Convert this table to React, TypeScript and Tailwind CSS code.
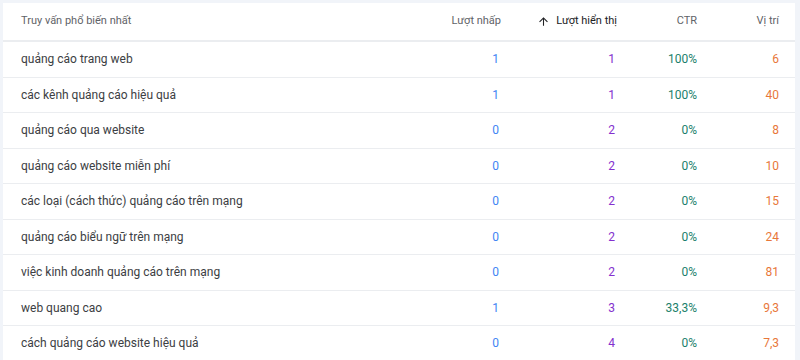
const rows = [
  { q: "quảng cáo trang web", clicks: "1", imp: "1", ctr: "100%", pos: "6" },
  { q: "các kênh quảng cáo hiệu quả", clicks: "1", imp: "1", ctr: "100%", pos: "40" },
  { q: "quảng cáo qua website", clicks: "0", imp: "2", ctr: "0%", pos: "8" },
  { q: "quảng cáo website miễn phí", clicks: "0", imp: "2", ctr: "0%", pos: "10" },
  { q: "các loại (cách thức) quảng cáo trên mạng", clicks: "0", imp: "2", ctr: "0%", pos: "15" },
  { q: "quảng cáo biểu ngữ trên mạng", clicks: "0", imp: "2", ctr: "0%", pos: "24" },
  { q: "việc kinh doanh quảng cáo trên mạng", clicks: "0", imp: "2", ctr: "0%", pos: "81" },
  { q: "web quang cao", clicks: "1", imp: "3", ctr: "33,3%", pos: "9,3" },
  { q: "cách quảng cáo website hiệu quả", clicks: "0", imp: "4", ctr: "0%", pos: "7,3" },
];

function ArrowUp() {
  return (
    <svg width="13" height="13" viewBox="0 0 24 24" className="mr-[6px]">
      <path d="M4 12l1.41 1.41L11 7.83V20h2V7.83l5.58 5.59L20 12l-8-8-8 8z" fill="#202124" />
    </svg>
  );
}

export default function App() {
  return (
    <div
      className="w-[800px] h-[360px] overflow-hidden bg-[#f1f4f9] pt-[3px] pl-[3px] pr-[5px]"
      style={{ fontFamily: "Roboto, 'Noto Sans', sans-serif" }}
    >
      <div className="bg-white h-full">
        {/* Header */}
        <div className="flex items-center h-[39px] border-b-2 border-[#ebedf0] text-[11px] text-[#5f6368]">
          <div className="flex-1 pl-[18px]">Truy vấn phổ biến nhất</div>
          <div className="w-[120px] text-right">Lượt nhấp</div>
          <div className="w-[116px] flex items-center justify-end text-[#202124]">
            <ArrowUp />
            Lượt hiển thị
          </div>
          <div className="w-[80px] text-right">CTR</div>
          <div className="w-[82px] text-right">Vị trí</div>
          <div className="w-[16px]" />
        </div>
        {rows.map((r) => (
          <div
            key={r.q}
            className="flex items-center h-[35.5px] border-b border-[#ebedf0] text-[12px]"
          >
            <div className="flex-1 pl-[18px] text-[#3c4043]">{r.q}</div>
            <div className="w-[120px] text-right text-[#4285f4] pr-[2px]">{r.clicks}</div>
            <div className="w-[116px] text-right text-[#8430ce] pr-[2px]">{r.imp}</div>
            <div className="w-[80px] text-right text-[#1b7f6b]">{r.ctr}</div>
            <div className="w-[82px] text-right text-[#e8773a]">{r.pos}</div>
            <div className="w-[16px]" />
          </div>
        ))}
      </div>
    </div>
  );
}
